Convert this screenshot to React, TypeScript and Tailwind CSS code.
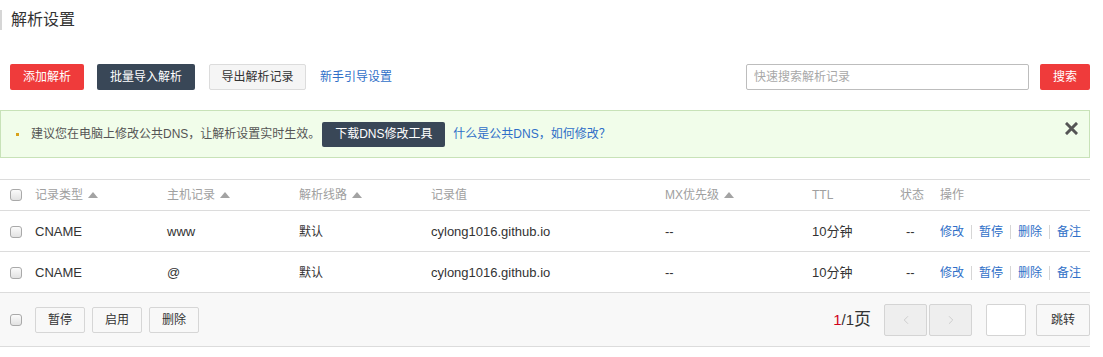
import { ChevronLeft, ChevronRight } from 'lucide-react';

const font = { fontFamily: '"Liberation Sans", "Noto Sans CJK SC", sans-serif' };

const records = [
  { type: 'CNAME', host: 'www', line: '默认', value: 'cylong1016.github.io', mx: '--', ttl: '10分钟', status: '--' },
  { type: 'CNAME', host: '@', line: '默认', value: 'cylong1016.github.io', mx: '--', ttl: '10分钟', status: '--' },
];

const cols = 'grid grid-cols-[35px_132px_132px_132px_234px_147px_88px_40px_1fr] items-center';

function Checkbox() {
  return (
    <span className="block w-[12px] h-[12px] rounded-[3px] border border-[#a9a9a9] bg-gradient-to-b from-[#fbfbfb] to-[#e2e2e2]" />
  );
}

function SortArrow() {
  return (
    <svg width="10" height="6" viewBox="0 0 10 6" className="ml-[5px] inline-block">
      <path d="M0 6 L5 0 L10 6 Z" fill="#a3a3a3" />
    </svg>
  );
}

function Sep() {
  return <span className="mx-[7px] w-px h-[14px] bg-[#d6d6d6]" />;
}

export default function App() {
  return (
    <div style={font} className="w-[1090px] text-[12px] text-[#333] bg-white">
      {/* 标题 */}
      <div className="pt-[10px]">
        <div className="h-[20px] border-l-2 border-[#d6d6d6] pl-[9px] flex items-center text-[16px] text-[#333]">
          解析设置
        </div>
      </div>

      {/* 工具栏 */}
      <div className="mt-[34px] h-[26px] pl-[10px] flex items-center">
        <button className="h-[26px] w-[74px] rounded-[2px] bg-[#ef3b3b] text-white text-[12px]">添加解析</button>
        <button className="ml-[13px] h-[26px] w-[98px] rounded-[2px] bg-[#394757] text-white text-[12px]">批量导入解析</button>
        <button className="ml-[14px] h-[26px] w-[97px] rounded-[2px] bg-[#f5f5f5] border border-[#dcdcdc] text-[#333] text-[12px]">导出解析记录</button>
        <a className="ml-[14px] text-[#2f6fc8] text-[12px]">新手引导设置</a>
        <div className="ml-auto flex items-center">
          <input
            placeholder="快速搜索解析记录"
            className="h-[26px] w-[283px] rounded-[2px] border border-[#bdbdbd] px-[7px] text-[12px] outline-none placeholder:text-[#a8a8a8]"
          />
          <button className="ml-[11px] h-[26px] w-[50px] rounded-[2px] bg-[#ef3b3b] text-white text-[12px]">搜索</button>
        </div>
      </div>

      {/* 提示 */}
      <div className="mt-[20px] h-[48px] border border-[#c8e2b8] bg-[#f1fdea] flex items-center pl-[15px] pr-[10px]">
        <span className="w-[3px] h-[3px] bg-[#d9a21b]" />
        <span className="ml-[12px] text-[#555]">建议您在电脑上修改公共DNS，让解析设置实时生效。</span>
        <button className="ml-[2px] h-[25px] w-[123px] rounded-[2px] bg-[#394757] text-white text-[12px]">下载DNS修改工具</button>
        <a className="ml-[8px] text-[#2f6fc8]">什么是公共DNS，如何修改？</a>
        <svg width="13" height="13" viewBox="0 0 13 13" className="ml-auto mr-[1px] -mt-[12px]">
          <path d="M2 2 L11 11 M11 2 L2 11" stroke="#555" strokeWidth="3" strokeLinecap="square" />
        </svg>
      </div>

      {/* 表格 */}
      <div className="mt-[21px] border-t border-[#dcdcdc]">
        <div className={`${cols} h-[31px] border-b border-[#dcdcdc] text-[#a0a0a0]`}>
          <div className="pl-[10px]"><Checkbox /></div>
          <div className="flex items-center">记录类型<SortArrow /></div>
          <div className="flex items-center">主机记录<SortArrow /></div>
          <div className="flex items-center">解析线路<SortArrow /></div>
          <div>记录值</div>
          <div className="flex items-center">MX优先级<SortArrow /></div>
          <div>TTL</div>
          <div>状态</div>
          <div>操作</div>
        </div>
        {records.map((r, i) => (
          <div key={i} className={`${cols} h-[41px] border-b border-[#dcdcdc] pt-[1px]`}>
            <div className="pl-[10px]"><Checkbox /></div>
            <div className="text-[13px]">{r.type}</div>
            <div className="text-[13px]">{r.host}</div>
            <div>{r.line}</div>
            <div className="text-[13px]">{r.value}</div>
            <div className="text-[13px]">{r.mx}</div>
            <div className="text-[13px]">{r.ttl}</div>
            <div className="pl-[6px] text-[13px]">{r.status}</div>
            <div className="flex items-center text-[#2f6fc8]">
              <a>修改</a>
              <Sep />
              <a>暂停</a>
              <Sep />
              <a>删除</a>
              <Sep />
              <a>备注</a>
            </div>
          </div>
        ))}

        {/* 底部 */}
        <div className="h-[54px] bg-[#f8f8f8] border-b border-[#dcdcdc] flex items-center pl-[10px]">
          <Checkbox />
          <button className="ml-[13px] h-[26px] w-[50px] rounded-[2px] bg-[#f8f8f8] border border-[#d6d6d6] text-[#333]">暂停</button>
          <button className="ml-[7px] h-[26px] w-[50px] rounded-[2px] bg-[#f8f8f8] border border-[#d6d6d6] text-[#333]">启用</button>
          <button className="ml-[7px] h-[26px] w-[50px] rounded-[2px] bg-[#f8f8f8] border border-[#d6d6d6] text-[#333]">删除</button>

          <div className="ml-auto flex items-center">
            <div className="flex items-baseline">
              <span className="text-[15px] text-[#d0021b]">1</span>
              <span className="text-[15px] text-[#333]">/1</span>
              <span className="text-[17px] text-[#333]">页</span>
            </div>
            <button className="ml-[13px] h-[32px] w-[43px] flex items-center justify-center bg-[#eeeeee] border border-[#d4d4d4] rounded-[2px]">
              <ChevronLeft className="w-[14px] h-[14px] text-[#c8c8c8]" strokeWidth={1.5} />
            </button>
            <button className="ml-[2px] h-[32px] w-[43px] flex items-center justify-center bg-[#eeeeee] border border-[#d4d4d4] rounded-[2px]">
              <ChevronRight className="w-[14px] h-[14px] text-[#c8c8c8]" strokeWidth={1.5} />
            </button>
            <input className="ml-[14px] h-[32px] w-[40px] bg-white border border-[#d4d4d4] rounded-[2px] outline-none" />
            <button className="ml-[10px] h-[32px] w-[54px] bg-[#f8f8f8] border border-[#d4d4d4] rounded-[2px] text-[#333]">跳转</button>
          </div>
        </div>
      </div>
    </div>
  );
}
